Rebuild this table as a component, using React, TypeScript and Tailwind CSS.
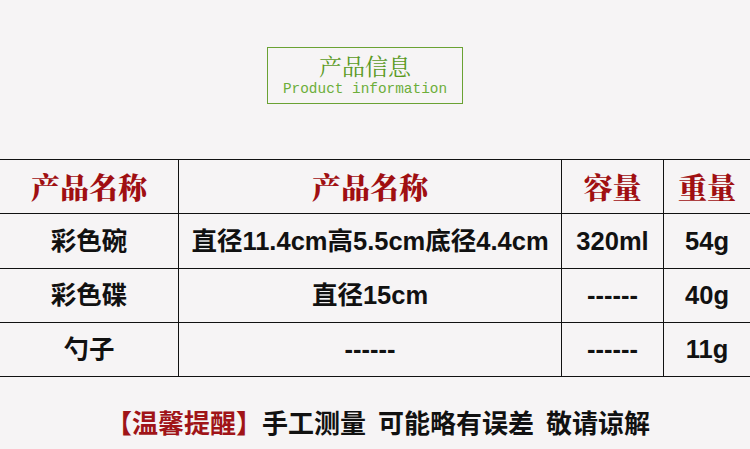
import React from 'react';

const rows = [
  { name: '彩色碗', size: '直径11.4cm高5.5cm底径4.4cm', volume: '320ml', weight: '54g' },
  { name: '彩色碟', size: '直径15cm', volume: '------', weight: '40g' },
  { name: '勺子', size: '------', volume: '------', weight: '11g' },
];

const sans = "font-['Liberation_Sans','Noto_Sans_CJK_SC',sans-serif]";
const serif = "font-['Noto_Serif_CJK_SC','Liberation_Serif','Noto_Sans_CJK_SC',serif]";

const App: React.FC = () => {
  return (
    <div className="w-[750px] h-[449px] bg-[#f6f4f5] overflow-hidden flex flex-col">
      {/* Title badge */}
      <div className="pt-[47px] pl-[267px]">
        <div className="w-[196px] h-[57px] border border-[#6aa233] flex flex-col items-center pt-[5px]">
          <span className={`${serif} text-[23px] leading-[26px] text-[#5a9a1e]`}>产品信息</span>
          <span className="mt-[3px] font-['Liberation_Mono',monospace] text-[14.4px] leading-[15px] text-[#6cae3a]">
            Product information
          </span>
        </div>
      </div>

      {/* Spec table */}
      <div className="mt-[55px] border-t border-[#111]">
        <div className="grid grid-cols-[178px_383px_102px_87px] h-[54px] border-b border-[#111]">
          {['产品名称', '产品名称', '容量', '重量'].map((h, i) => (
            <div
              key={i}
              className={`flex items-center justify-center ${serif} font-black text-[29px] text-[#a00f12] ${i > 0 ? 'border-l border-[#111]' : ''}`}
            >
              {h}
            </div>
          ))}
        </div>
        {rows.map((r, idx) => (
          <div
            key={r.name}
            className={`grid grid-cols-[178px_383px_102px_87px] ${idx === 0 ? 'h-[55px]' : 'h-[54px]'} border-b border-[#111]`}
          >
            {[r.name, r.size, r.volume, r.weight].map((c, i) => (
              <div
                key={i}
                className={`flex items-center justify-center ${sans} font-bold text-[25.5px] text-[#111] whitespace-nowrap ${i > 0 ? 'border-l border-[#111]' : ''}`}
              >
                {c}
              </div>
            ))}
          </div>
        ))}
      </div>

      {/* Reminder */}
      <div className="mt-[31px] pl-[106px] flex items-center font-['Noto_Sans_CJK_SC',sans-serif] text-[26px] leading-[28px]">
        <span className="font-bold text-[#a01418]">【温馨提醒】</span>
        <span className="font-semibold text-[#111]">手工测量</span>
        <span className="w-[12px]" />
        <span className="font-semibold text-[#111]">可能略有误差</span>
        <span className="w-[12px]" />
        <span className="font-semibold text-[#111]">敬请谅解</span>
      </div>
    </div>
  );
};

export default App;
